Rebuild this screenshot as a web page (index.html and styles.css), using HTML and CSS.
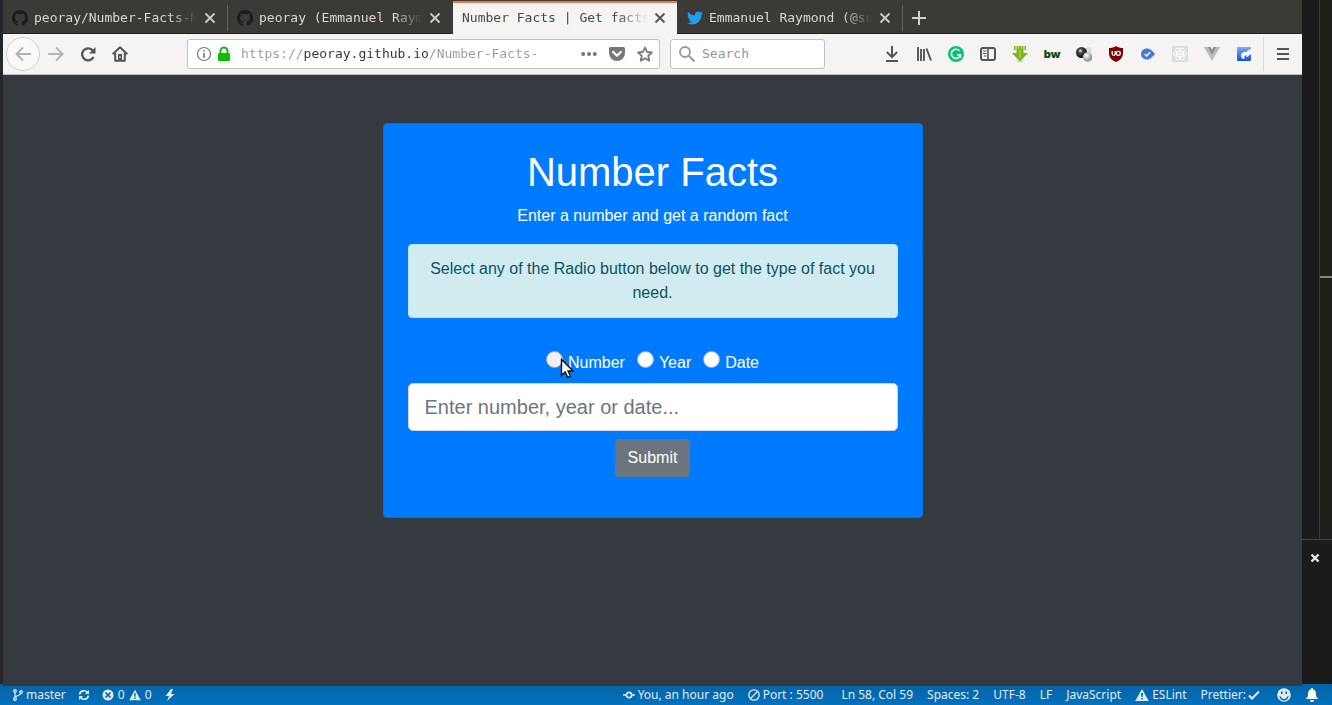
FILE: index.html
```html
<!DOCTYPE html>
<html lang="en">
<head>
<meta charset="utf-8">
<title>Number Facts | Get facts</title>
<link rel="stylesheet" href="styles.css">
</head>
<body>
<svg class="defs" aria-hidden="true">
  <symbol id="github" viewBox="0 0 16 16"><path fill="currentColor" d="M8 0C3.58 0 0 3.58 0 8c0 3.54 2.29 6.53 5.47 7.59.4.07.55-.17.55-.38 0-.19-.01-.82-.01-1.49-2.01.37-2.53-.49-2.69-.94-.09-.23-.48-.94-.82-1.13-.28-.15-.68-.52-.01-.53.63-.01 1.08.58 1.23.82.72 1.21 1.87.87 2.33.66.07-.52.28-.87.51-1.07-1.78-.2-3.64-.89-3.64-3.95 0-.87.31-1.59.82-2.15-.08-.2-.36-1.02.08-2.12 0 0 .67-.21 2.2.82a7.6 7.6 0 0 1 4 0c1.53-1.04 2.2-.82 2.2-.82.44 1.1.16 1.92.08 2.12.51.56.82 1.27.82 2.15 0 3.07-1.87 3.75-3.65 3.95.29.25.54.73.54 1.48 0 1.07-.01 1.93-.01 2.2 0 .21.15.46.55.38A8.01 8.01 0 0 0 16 8c0-4.42-3.58-8-8-8z"/></symbol>
  <symbol id="close" viewBox="0 0 16 16"><path d="M3.500 3.500l9 9m0-9l-9 9" stroke="currentColor" stroke-width="1.800" fill="none"/></symbol>
  <symbol id="warn" viewBox="0 0 14 14"><path fill="currentColor" fill-rule="evenodd" d="M7 1L.2 13h13.600zM6 5h2l-.3 4H6.300zM6.200 10h1.600v1.600H6.200z"/></symbol>
</svg>
<div class="desktop">
  <div class="workspace">
    <div class="browser">
      <nav class="tabs" aria-label="Tabs">
        <div class="tab">
          <svg class="i16 gh"><use href="#github"/></svg>
          <span class="tab-title">peoray/Number-Facts-M</span>
          <button class="tab-close" aria-label="Close tab"><svg class="i16"><use href="#close"/></svg></button>
        </div>
        <div class="tab">
          <svg class="i16 gh"><use href="#github"/></svg>
          <span class="tab-title">peoray (Emmanuel Raym</span>
          <button class="tab-close" aria-label="Close tab"><svg class="i16"><use href="#close"/></svg></button>
        </div>
        <div class="tab tab-active">
          <span class="tab-title">Number Facts | Get facts</span>
          <button class="tab-close" aria-label="Close tab"><svg class="i16"><use href="#close"/></svg></button>
        </div>
        <div class="tab">
          <svg class="i16" viewBox="0 0 24 24"><path fill="#1da1f2" d="M23.950 4.570a10 10 0 0 1-2.820.770 4.960 4.960 0 0 0 2.160-2.720c-.950.550-2 .950-3.130 1.180a4.920 4.920 0 0 0-8.380 4.480C7.690 8.100 4.070 6.130 1.640 3.160a4.820 4.820 0 0 0-.670 2.480c0 1.710.870 3.210 2.190 4.100a4.900 4.900 0 0 1-2.230-.620v.060a4.920 4.920 0 0 0 3.950 4.830 5 5 0 0 1-2.210.080 4.940 4.940 0 0 0 4.600 3.420A9.870 9.870 0 0 1 0 19.540a13.990 13.990 0 0 0 7.560 2.210c9.050 0 14-7.500 14-13.980 0-.210 0-.420-.020-.630a9.940 9.940 0 0 0 2.410-2.570z"/></svg>
          <span class="tab-title">Emmanuel Raymond (@su</span>
          <button class="tab-close" aria-label="Close tab"><svg class="i16"><use href="#close"/></svg></button>
        </div>
        <button class="new-tab" aria-label="New tab"><svg class="i16" viewBox="0 0 16 16"><path d="M8 1v14M1 8h14" stroke="currentColor" stroke-width="2"/></svg></button>
      </nav>

      <div class="toolbar">
        <button class="tool back" aria-label="Back"><svg class="i16" viewBox="0 0 16 16"><path d="M16 8H1.500M8 1.500L1.500 8 8 14.500" fill="none" stroke="currentColor" stroke-width="2"/></svg></button>
        <button class="tool faded" aria-label="Forward"><svg class="i16" viewBox="0 0 16 16"><path d="M0 8h14.500M8 1.500L14.500 8 8 14.500" fill="none" stroke="currentColor" stroke-width="2"/></svg></button>
        <button class="tool" aria-label="Reload"><svg class="i16" viewBox="0 0 16 16"><path d="M12.800 4.500A6 6 0 1 0 13.500 11" fill="none" stroke="currentColor" stroke-width="2.300"/><path d="M15.500 1v6.500H9z" fill="currentColor"/></svg></button>
        <button class="tool" aria-label="Home"><svg class="i16" viewBox="0 0 16 16"><path d="M.7 8.300L8 1.300l7.300 7M3.200 7v7.800h9.600V7" fill="none" stroke="currentColor" stroke-width="2" stroke-linejoin="round"/><path fill="currentColor" fill-rule="evenodd" d="M6 8h4v6H6zM7.500 10h1v2h-1z"/></svg></button>
        <span class="spacer"></span>
        <div class="field url">
          <button class="field-btn" aria-label="Site information"><svg class="i16" viewBox="0 0 16 16"><circle cx="8" cy="8" r="6.500" fill="none" stroke="#777" stroke-width="1.200"/><path d="M7.200 4h1.600v1.600H7.200zM7.200 7h1.600v5H7.200z" fill="#777"/></svg></button>
          <svg class="lock" viewBox="0 0 14 16"><path d="M3.500 8V5a3.500 3.500 0 0 1 7 0v3" fill="none" stroke="#12bc00" stroke-width="2"/><rect x="1" y="7" width="12" height="8" rx="1" fill="#12bc00"/></svg>
          <input class="address" type="text" aria-label="Address" value="https://peoray.github.io/Number-Facts-">
          <button class="page-action" aria-label="Page actions"><svg class="i16" viewBox="0 0 16 16"><g fill="#777"><circle cx="2.200" cy="8" r="2"/><circle cx="8" cy="8" r="2"/><circle cx="13.800" cy="8" r="2"/></g></svg></button>
          <button class="page-action" aria-label="Save to Pocket"><svg class="i16" viewBox="0 0 16 16"><path fill="#777" d="M1.500 1h13A1.500 1.500 0 0 1 16 2.500V7A8 8 0 0 1 0 7V2.500A1.500 1.500 0 0 1 1.500 1z"/><path d="M4.200 6L8 9.700 11.800 6" fill="none" stroke="#fff" stroke-width="2.200" stroke-linecap="round" stroke-linejoin="round"/></svg></button>
          <button class="page-action" aria-label="Bookmark"><svg class="i16" viewBox="0 0 16 16"><path d="M8 1.500l2 4.500 4.900.500-3.700 3.300 1.100 4.900L8 12.200l-4.300 2.500 1.100-4.900L1.100 6.500 6 6z" fill="none" stroke="#777" stroke-width="1.800" stroke-linejoin="round"/></svg></button>
        </div>
        <div class="field search">
          <svg class="i16" viewBox="0 0 16 16"><circle cx="6" cy="6" r="5" fill="none" stroke="#999" stroke-width="1.800"/><path d="M9.500 9.500l6 6" stroke="#999" stroke-width="2"/></svg>
          <input class="search-input" type="text" placeholder="Search" aria-label="Search">
        </div>
        <span class="spacer"></span>
        <button class="tool" aria-label="Downloads"><svg class="i16" viewBox="0 0 16 16"><path d="M8 0v11M2.800 6L8 11.200 13.200 6M2 15h12" fill="none" stroke="currentColor" stroke-width="2"/></svg></button>
        <button class="tool" aria-label="Library"><svg class="i16" viewBox="0 0 16 16"><path d="M2 1v14M5 3v12M8 3v12M10.500 2.500L15 14.500" fill="none" stroke="currentColor" stroke-width="1.900"/></svg></button>
        <button class="tool" aria-label="Grammarly"><svg class="i16" viewBox="0 0 16 16"><circle cx="8" cy="8" r="8" fill="#0bc277"/><path d="M11.500 4.800A4.600 4.600 0 1 0 12.500 8.800H9M12.400 8.500v3.300" fill="none" stroke="#fff" stroke-width="1.500"/></svg></button>
        <button class="tool" aria-label="Sidebar"><svg class="i16" viewBox="0 0 16 16"><rect x="1" y="2" width="14" height="12" rx="2" fill="none" stroke="currentColor" stroke-width="2"/><path d="M8 2v12" stroke="currentColor" stroke-width="1.600"/><path d="M3 5h3.500M3 7.500h3.500M4 10h2.500" stroke="currentColor"/></svg></button>
        <button class="tool" aria-label="Download helper"><svg class="i16" viewBox="0 0 16 16"><ellipse cx="8" cy="15.200" rx="4" ry=".8" fill="#ccc"/><path d="M2 0h1.500v4H2zM4.500 0h7v7H16l-8 8.500L0 7h4.500zM12.500 0H14v4h-1.500z" fill="#7cb51c"/><path d="M6.500 0v3M9.500 0v3M8 4v8" stroke="#b5d95c" stroke-width="1.200"/></svg></button>
        <button class="tool bw" aria-label="BuiltWith">bw</button>
        <button class="tool" aria-label="Spheres"><svg class="i16" viewBox="0 0 16 16"><defs><radialGradient id="dark" cx=".4" cy=".35" r=".6"><stop offset="0" stop-color="#eee"/><stop offset=".35" stop-color="#444"/><stop offset="1" stop-color="#111"/></radialGradient><radialGradient id="pale" cx=".4" cy=".35" r=".7"><stop offset="0" stop-color="#fff"/><stop offset="1" stop-color="#777"/></radialGradient></defs><circle cx="12.500" cy="4.500" r="3.500" fill="#ddd"/><circle cx="5.500" cy="6.500" r="5.500" fill="url(#dark)"/><circle cx="11.500" cy="11" r="4.700" fill="url(#pale)"/></svg></button>
        <button class="tool" aria-label="uBlock Origin"><svg class="i16" viewBox="0 0 16 16"><path d="M8 0c2 1.400 4.500 2 7 2v5c0 4.500-2.500 7-7 9-4.500-2-7-4.500-7-9V2c2.500 0 5-.6 7-2z" fill="#800000"/><path d="M4.200 5v2.800a1.500 1.500 0 0 0 3 0V5" fill="none" stroke="#fff" stroke-width="1.300"/><circle cx="10.300" cy="7.300" r="2" fill="none" stroke="#fff" stroke-width="1.300"/></svg></button>
        <button class="tool" aria-label="Verified"><svg class="i16" viewBox="0 0 16 16"><path d="M7 2.500c3 0 4.500 1.500 8 5.500-3.500 4-5 5.500-8 5.500-4 0-6-2.500-6-5.500s2-5.500 6-5.500z" fill="#447bd8"/><path d="M4.800 8l1.900 2 3.300-3.700" fill="none" stroke="#fff" stroke-width="1.500"/></svg></button>
        <button class="tool" aria-label="React Developer Tools"><svg class="i16" viewBox="0 0 16 16"><path fill="#dcdcd9" d="M0 0h16v16H0z"/><g fill="none" stroke="#fff"><ellipse cx="8" cy="8" rx="6.500" ry="2.600"/><ellipse cx="8" cy="8" rx="6.500" ry="2.600" transform="rotate(60 8 8)"/><ellipse cx="8" cy="8" rx="6.500" ry="2.600" transform="rotate(120 8 8)"/></g><circle cx="8" cy="8" r="1.300" fill="#fff"/></svg></button>
        <button class="tool" aria-label="Vue Devtools"><svg class="i16" viewBox="0 0 16 16"><path d="M0 1h3.500L8 9l4.500-8H16L8 15z" fill="#bbb"/><path d="M3.500 1h3L8 3.800 9.500 1h3L8 9z" fill="#8e8e8e"/></svg></button>
        <button class="tool" aria-label="Web page tool"><svg class="i16" viewBox="0 0 16 16"><defs><linearGradient id="blue" x2="0" y2="1"><stop stop-color="#79aef5"/><stop offset="1" stop-color="#1253db"/></linearGradient></defs><rect x="1" y="1" width="14" height="14" rx="1" fill="url(#blue)"/><path d="M15.500 2.500L10 6c-3-.5-5 1-5 3.500S6.500 13 8.500 13c-1-2 0-3.500 2-4v2.500l5-4z" fill="#fff"/></svg></button>
        <button class="tool menu" aria-label="Menu"><svg class="i16" viewBox="0 0 16 16"><path d="M2 3h12M2 8h12M2 13h12" stroke="currentColor" stroke-width="2"/></svg></button>
      </div>

      <main class="page">
        <section class="card">
          <h1 class="title">Number Facts</h1>
          <p class="lead">Enter a number and get a random fact</p>
          <div class="alert">Select any of the Radio button below to get the type of fact you need.</div>
          <form class="fact-form">
            <div class="choices">
              <label class="choice choice-hover"><input class="radio" type="radio" name="kind"><span>Number</span><svg class="cursor" viewBox="0 0 14 21" aria-hidden="true"><path d="M1.500 1.500v16l3.700-3.500 2.600 5.500 2.700-1.200-2.500-5.300h5z" fill="#fff" stroke="#111" stroke-width="1.400"/></svg></label>
              <label class="choice"><input class="radio" type="radio" name="kind"><span>Year</span></label>
              <label class="choice"><input class="radio" type="radio" name="kind"><span>Date</span></label>
            </div>
            <input class="fact-input" type="text" placeholder="Enter number, year or date..." aria-label="Number, year or date">
            <button class="submit" type="button">Submit</button>
          </form>
        </section>
      </main>
    </div>
    <aside class="editor">
      <div class="editor-map"><span class="map-mark"></span></div>
      <div class="panel"><button class="panel-close" aria-label="Close panel"><svg class="i12" viewBox="0 0 12 12"><path d="M2.500 2.500l7 7m0-7l-7 7" stroke="#e8e8e8" stroke-width="2.400"/></svg></button></div>
    </aside>
  </div>

  <footer class="status">
    <div class="group">
      <span class="item"><svg class="i12" viewBox="0 0 12 12"><g fill="none" stroke="currentColor" stroke-width="1.300"><circle cx="3" cy="2" r="1.300"/><circle cx="3" cy="10" r="1.300"/><circle cx="9" cy="3" r="1.300"/><path d="M3 3.300v5.400M9 4.300C9 7 3 6 3 9"/></g></svg>master</span>
      <span class="item"><svg class="i12" viewBox="0 0 12 12"><path d="M1.500 5.500a4.500 4.500 0 0 1 8-2M10.500 6.500a4.500 4.500 0 0 1-8 2" fill="none" stroke="currentColor" stroke-width="1.600"/><path d="M11 1v4H7zM1 11V7h4z" fill="currentColor"/></svg></span>
      <span class="item counts"><svg class="i12" viewBox="0 0 12 12"><circle cx="6" cy="6" r="5.500" fill="currentColor"/><path d="M3.500 3.500l5 5m0-5l-5 5" stroke="#0465ab" stroke-width="1.700"/></svg>0 <svg class="i12"><use href="#warn"/></svg>0</span>
      <span class="item"><svg class="i12" viewBox="0 0 12 12"><path d="M7 0L1.500 7H5l-2 5 7.500-7H7L9 0z" fill="currentColor"/></svg></span>
    </div>
    <div class="group group-end">
      <span class="item"><svg class="i12" viewBox="0 0 12 12"><circle cx="6" cy="6" r="2.700" fill="none" stroke="currentColor" stroke-width="1.700"/><path d="M0 6h3m6 0h3" stroke="currentColor" stroke-width="1.700"/></svg>You, an hour ago</span>
      <span class="item wide"><svg class="i12" viewBox="0 0 12 12"><g fill="none" stroke="currentColor" stroke-width="1.300"><circle cx="6" cy="6" r="5.200"/><path d="M2.500 9.500l7-7"/></g></svg>Port : 5500</span>
      <span class="item">Ln 58, Col 59</span>
      <span class="item">Spaces: 2</span>
      <span class="item">UTF-8</span>
      <span class="item">LF</span>
      <span class="item">JavaScript</span>
      <span class="item"><svg class="i14"><use href="#warn"/></svg>ESLint</span>
      <span class="item tight">Prettier:<svg class="i12" viewBox="0 0 12 12"><path d="M1 6.500L4 9.500 11 2.500" fill="none" stroke="currentColor" stroke-width="2"/></svg></span>
      <span class="item"><svg class="i14" viewBox="0 0 14 14"><circle cx="7" cy="7" r="6.800" fill="currentColor"/><path d="M2.500 8a4.500 4.500 0 0 0 9 0l-1.200.500a3.400 3.400 0 0 1-6.600 0z" fill="#0465ab"/><path d="M4.800 3.500v2.500M9.200 3.500v2.500" stroke="#0465ab" stroke-width="1.500"/></svg></span>
      <span class="item"><svg class="i14" viewBox="0 0 14 14"><path d="M7 0a1 1 0 0 1 1 1.300C10.500 2 11 4 11 6.500c0 2 1 3.500 2.500 4.500H.5C2 10 3 8.500 3 6.500 3 4 3.500 2 6 1.300A1 1 0 0 1 7 0zM5 12h4a2 2 0 0 1-4 0z" fill="#fff"/></svg></span>
    </div>
  </footer>
</div>
</body>
</html>
```
FILE: styles.css
```css
* { box-sizing: border-box; }
body { margin: 0; font-family: "Liberation Sans", Arial, sans-serif; font-size: 16px; line-height: 24px; }
button { margin: 0; padding: 0; border: 0; background: none; color: inherit; font: inherit; }
input { margin: 0; font: inherit; }
svg { display: block; flex: none; }
.defs { position: absolute; width: 0; height: 0; }
.i16 { width: 16px; height: 16px; }
.i14 { width: 14px; height: 14px; }
.i12 { width: 12px; height: 12px; }

.desktop { display: flex; flex-direction: column; min-height: 100vh; background: #1b1b1b; }
.workspace { display: flex; flex: 1; padding-left: 3px; background: #26262a; }
.browser { position: relative; z-index: 1; display: flex; flex: 1; flex-direction: column; min-width: 0; margin-bottom: -2px; }

.tabs { display: flex; height: 34px; background: #3c3a36; border-bottom: 1px solid #231d1f; color: #dcd8cd; font: 13px/18px "DejaVu Sans Mono", monospace; }
.tab { display: flex; flex: 0 1 225px; align-items: center; gap: 6px; min-width: 0; padding: 2px 9px 0; border-right: 1px solid transparent; }
.tab:first-child, .tab:nth-child(4) { border-image: linear-gradient(transparent 6px, #66635e 6px, #66635e 30px, transparent 30px) 1; }
.tab-active { margin-bottom: -1px; padding: 1px 9px 0; background: linear-gradient(#f07746 0 2px, #f5f4f2 2px) 0 1px no-repeat padding-box; color: #45484b; }
.tab-title { flex: 1; margin-right: -5px; overflow: hidden; white-space: nowrap; mask-image: linear-gradient(to left, transparent 4px, #000 32px); }
.tab-close { color: #cfccc4; }
.tab-active .tab-close { color: #555; }
.gh { color: #1b1b1b; }
.new-tab { width: 32px; display: flex; align-items: center; justify-content: center; padding-top: 2px; color: #d5d2c9; }

.toolbar { display: flex; align-items: center; height: 41px; padding: 0 2px 0 3px; background: #f5f4f2; border-bottom: 1px solid #bbb; color: #555; font: 13px/18px "DejaVu Sans Mono", monospace; }
.tool { display: flex; flex: none; align-items: center; justify-content: center; width: 32px; height: 34px; }
.back { width: 34px; border: 1px solid #d2d0ce; border-radius: 50%; background: #faf9f8; color: #b1b1b1; }
.faded { color: #b5b5b5; }
.spacer { flex: 0 1 51px; }
.bw { color: #0b4f0b; font: 900 11px/18px Inter, sans-serif; }
.menu { width: 37px; margin-left: 3px; padding-left: 2px; border-left: 1px solid #dcdad8; }
.field { display: flex; align-items: center; height: 30px; border: 1px solid #c3c1bf; border-radius: 3px; background: #fff; }
.url { flex: 1 1 473px; min-width: 0; margin-right: 10px; padding: 0 6px 0 8px; }
.search { flex: 0 1 155px; min-width: 0; gap: 7px; padding: 0 8px; }
.lock { width: 14px; height: 16px; margin: 0 10px 0 5px; }
.address { flex: 1; min-width: 0; padding: 0; border: 0; outline: 0; color: #888; background: linear-gradient(90deg, #999 8ch, #333 8ch, #333 24ch, #999 24ch) text; -webkit-text-fill-color: transparent; }
.page-action { margin-left: 12px; }
.search-input { flex: 1; min-width: 0; padding: 0; border: 0; outline: 0; background: none; }
.search-input::placeholder { color: #91979b; opacity: 1; }

.page { display: flex; flex: 1; align-items: flex-start; justify-content: center; padding: 48px 16px; background: #343a40; }
.card { width: 100%; max-width: 540px; padding: 24px 24px 40px; border: 1px solid #0070e6; border-radius: 4px; background: #007bff; color: #fff; text-align: center; }
.title { margin: 0 0 8px; font-size: 40px; font-weight: 400; line-height: 48px; }
.lead { margin: 0 0 16px; }
.alert { margin-bottom: 33px; padding: 12px 20px; border: 1px solid #bee5eb; border-radius: 4px; background: #d1ecf1; color: #0c5460; }
.choices { display: flex; justify-content: center; gap: 12px; margin-bottom: 8px; }
.choice { display: flex; align-items: baseline; gap: 5px; }
.choice-hover { position: relative; }
.radio { appearance: none; width: 17px; height: 17px; border: 1px solid #a8a8a8; border-radius: 50%; background: #fff; }
.choice-hover .radio { background: #f0f0f0; }
.cursor { position: absolute; left: 14px; top: 7px; width: 14px; height: 21px; }
.fact-input { display: block; width: 100%; height: 48px; margin-bottom: 8px; padding: 8px 16px; border: 1px solid #ced4da; border-radius: 5px; background: #fff; color: #495057; font-size: 20px; line-height: 30px; }
.fact-input::placeholder { color: #6c757d; opacity: 1; }
.submit { height: 38px; padding: 0 13px; border-radius: 4px; background: #6c757d; color: #fff; }

.editor { display: flex; flex-direction: column; width: 30px; background: #1b1b1b; }
.editor-map { flex: 1; margin-left: 17px; padding-top: 276px; border-left: 1px solid #3a3a3a; background: #1e1e1b; }
.map-mark { display: block; height: 2px; background: #858585; }
.panel { height: 145px; padding: 12px 7px; border-top: 1px solid #444; }
.panel-close { display: block; }

.status { display: flex; align-items: center; justify-content: space-between; height: 21px; padding: 0 13px 0 12px; background: linear-gradient(#0463a5, #0471bd); color: #e2e9ee; font: 12px/18px "Noto Sans", sans-serif; white-space: nowrap; }
.group { display: flex; align-items: center; gap: 12px; }
.group-end { gap: 14px; }
.item { display: flex; align-items: center; gap: 2px; }
.group .counts { gap: 4px; }
.group-end .item { gap: 3px; }
.group-end .tight { gap: 2px; margin-right: 3px; }
.wide { margin-right: 4px; }
```
